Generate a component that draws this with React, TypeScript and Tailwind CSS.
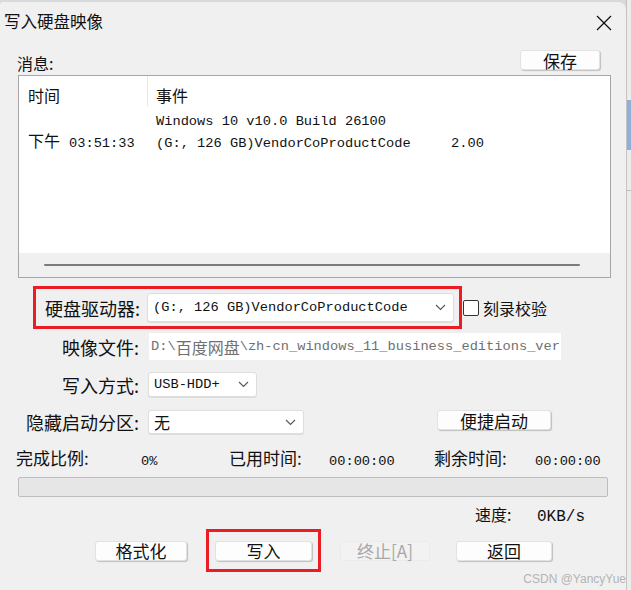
import React from "react";

const mono = "font-['Liberation_Mono','Noto_Sans_CJK_SC',monospace]";

const Chevron = () => (
  <svg width="11" height="7" viewBox="0 0 11 7" fill="none">
    <polyline points="1,1 5.5,5.5 10,1" stroke="#5a5a5a" strokeWidth="1.2" />
  </svg>
);

const Select = ({ width, height, children }: { width: number; height: number; children: React.ReactNode }) => (
  <div
    className="flex items-center justify-between bg-white border border-[#dedede] rounded-[3px] pl-[5px] pr-[7px] shadow-[0_1px_0_rgba(0,0,0,0.08)]"
    style={{ width, height }}
  >
    <div className="flex items-center">{children}</div>
    <Chevron />
  </div>
);

const Button = ({ width, label, disabled }: { width: number; label: string; disabled?: boolean }) => (
  <div
    className={
      disabled
        ? "h-[20px] flex items-center justify-center rounded-[3px] bg-[#f2f2f2] border border-[#ebebeb] text-[#a8a8a8] text-[17px] leading-none"
        : "h-[20px] flex items-center justify-center rounded-[3px] bg-[#fdfdfd] border border-[#e2e2e2] shadow-[1px_1px_1px_rgba(0,0,0,0.2)] text-[#111] text-[17px] leading-none"
    }
    style={{ width }}
  >
    {label}
  </div>
);

const Label = ({ children }: { children: React.ReactNode }) => (
  <div className="w-[140px] shrink-0 text-right text-[18px] leading-[20px] text-[#111] pr-[1px]">{children}</div>
);

export default function App() {
  return (
    <div className="w-[631px] h-[590px] overflow-hidden bg-[#d9d9d9] flex font-['Noto_Sans_CJK_SC',sans-serif] text-[#111]">
      <div className="relative mt-[2px] w-[626px] h-[588px] bg-[#f0f0f0] rounded-tr-[8px] rounded-tl-[3px] flex flex-col">
        {/* title bar */}
        <div className="h-[38px] flex items-center justify-between pl-[4px] pr-[14px]">
          <span className="text-[16.5px] leading-none">写入硬盘映像</span>
          <svg width="16" height="16" viewBox="0 0 16 16" className="mt-[3px]">
            <line x1="1" y1="1" x2="15" y2="15" stroke="#111" strokeWidth="1.3" />
            <line x1="15" y1="1" x2="1" y2="15" stroke="#111" strokeWidth="1.3" />
          </svg>
        </div>

        {/* message header */}
        <div className="h-[35px] flex justify-between pl-[17px] pr-[26px]">
          <span className="mt-[13px] text-[16px] leading-[20px]">消息:</span>
          <div className="mt-[10px]">
            <Button width={80} label="保存" />
          </div>
        </div>

        {/* list */}
        <div className="ml-[18px] w-[593px] h-[203px] bg-white border border-[#a6a6a6] flex flex-col">
          <div className="flex h-[31px]">
            <div className="w-[128px] pl-[9px] pt-[9px] text-[16px] leading-[20px]">时间</div>
            <div className="border-l border-[#e6e6e6] h-[30px] pl-[8px] pt-[9px] text-[16px] leading-[20px]">事件</div>
          </div>
          <div className="mt-[4px] flex h-[21px] items-center">
            <div className="w-[137px]" />
            <span className={`${mono} text-[13.7px] leading-none`}>Windows 10 v10.0 Build 26100</span>
          </div>
          <div className="flex h-[21px] items-baseline">
            <span className="ml-[9px] text-[16px] leading-none w-[41px]">下午</span>
            <span className={`${mono} text-[13.7px] leading-none w-[87px]`}>03:51:33</span>
            <span className={`${mono} text-[13.7px] leading-none w-[295px]`}>(G:, 126 GB)VendorCoProductCode</span>
            <span className={`${mono} text-[13.7px] leading-none`}>2.00</span>
          </div>
          <div className="flex-1" />
          <div className="h-[24px] bg-[#f0f0f0] flex items-center pl-[25px]">
            <div className="w-[536px] h-[2px] bg-[#7c7c7c] rounded-full" />
          </div>
        </div>

        {/* drive row */}
        <div className="mt-[8px] flex items-center">
          <div className="ml-[33px] w-[429px] h-[43px] border-[3px] border-[#ec1c24] flex items-center">
            <div className="w-[105px] text-right text-[18px] leading-[20px] pr-[1px]">硬盘驱动器:</div>
            <div className="ml-[6px]">
              <Select width={307} height={29}>
                <span className={`${mono} text-[13.7px] leading-none`}>(G:, 126 GB)VendorCoProductCode</span>
              </Select>
            </div>
          </div>
          <div className="ml-[1px] w-[16px] h-[16px] bg-white border border-[#333] rounded-[2px]" />
          <span className="ml-[4px] text-[16px] leading-none">刻录校验</span>
        </div>

        {/* image file */}
        <div className="mt-[4px] flex items-center h-[27px]">
          <Label>映像文件:</Label>
          <div className="ml-[9px] w-[412px] h-[27px] bg-white flex items-center pl-[2px] text-[#707070] whitespace-nowrap overflow-hidden">
            <span className={`${mono} text-[13.7px] leading-none`}>D:\</span>
            <span className="text-[16px] leading-none">百度网盘</span>
            <span className={`${mono} text-[13.7px] leading-none`}>\zh-cn_windows_11_business_editions_ver</span>
          </div>
        </div>

        {/* write mode */}
        <div className="mt-[12px] flex items-center h-[25px]">
          <Label>写入方式:</Label>
          <div className="ml-[8px]">
            <Select width={109} height={25}>
              <span className={`${mono} text-[13.7px] leading-none`}>USB-HDD+</span>
            </Select>
          </div>
        </div>

        {/* hidden partition */}
        <div className="mt-[13px] flex items-start h-[24px]">
          <div className="self-center">
            <Label>隐藏启动分区:</Label>
          </div>
          <div className="ml-[8px]">
            <Select width={156} height={24}>
              <span className="text-[16px] leading-none">无</span>
            </Select>
          </div>
          <div className="ml-[133px]">
            <Button width={114} label="便捷启动" />
          </div>
        </div>

        {/* stats */}
        <div className="mt-[15px] h-[18px] flex items-baseline pl-[16px] text-[17px] leading-none">
          <span className="w-[125px]">完成比例:</span>
          <span className={`${mono} text-[13.7px] w-[88px]`}>0%</span>
          <span className="w-[100px]">已用时间:</span>
          <span className={`${mono} text-[13.7px] w-[105px]`}>00:00:00</span>
          <span className="w-[101px]">剩余时间:</span>
          <span className={`${mono} text-[13.7px]`}>00:00:00</span>
        </div>

        {/* progress */}
        <div className="mt-[10px] ml-[18px] w-[590px] h-[20px] bg-[#e6e6e6] border border-[#bdbdbd] rounded-[2px]" />

        {/* speed */}
        <div className="mt-[9px] h-[18px] flex items-baseline pl-[475px] text-[16px] leading-none">
          <span className="w-[62px]">速度:</span>
          <span className={`${mono} text-[16px]`}>0KB/s</span>
        </div>

        {/* buttons */}
        <div className="mt-[5px] flex items-center">
          <div className="ml-[95px]">
            <Button width={92} label="格式化" />
          </div>
          <div className="ml-[19px] w-[115px] h-[43px] border-[3px] border-[#ec1c24] flex items-center px-[6px]">
            <Button width={97} label="写入" />
          </div>
          <div className="ml-[19px]">
            <Button width={90} label="终止[A]" disabled />
          </div>
          <div className="ml-[26px]">
            <Button width={96} label="返回" />
          </div>
        </div>

        <span className="absolute right-[0px] bottom-[5px] text-[12px] leading-none text-[#b4b4b4] font-['Liberation_Sans',sans-serif]">
          CSDN @YancyYue
        </span>
      </div>

      {/* neighbouring window edge */}
      <div className="w-[5px] h-full border-l border-[#c4c4c4] bg-[#ececec] flex flex-col">
        <div className="h-[100px]" />
        <div className="h-[50px] bg-[#8fb0d6]" />
        <div className="h-[40px]" />
        <div className="h-[1px] bg-[#bdbdbd]" />
      </div>
    </div>
  );
}
